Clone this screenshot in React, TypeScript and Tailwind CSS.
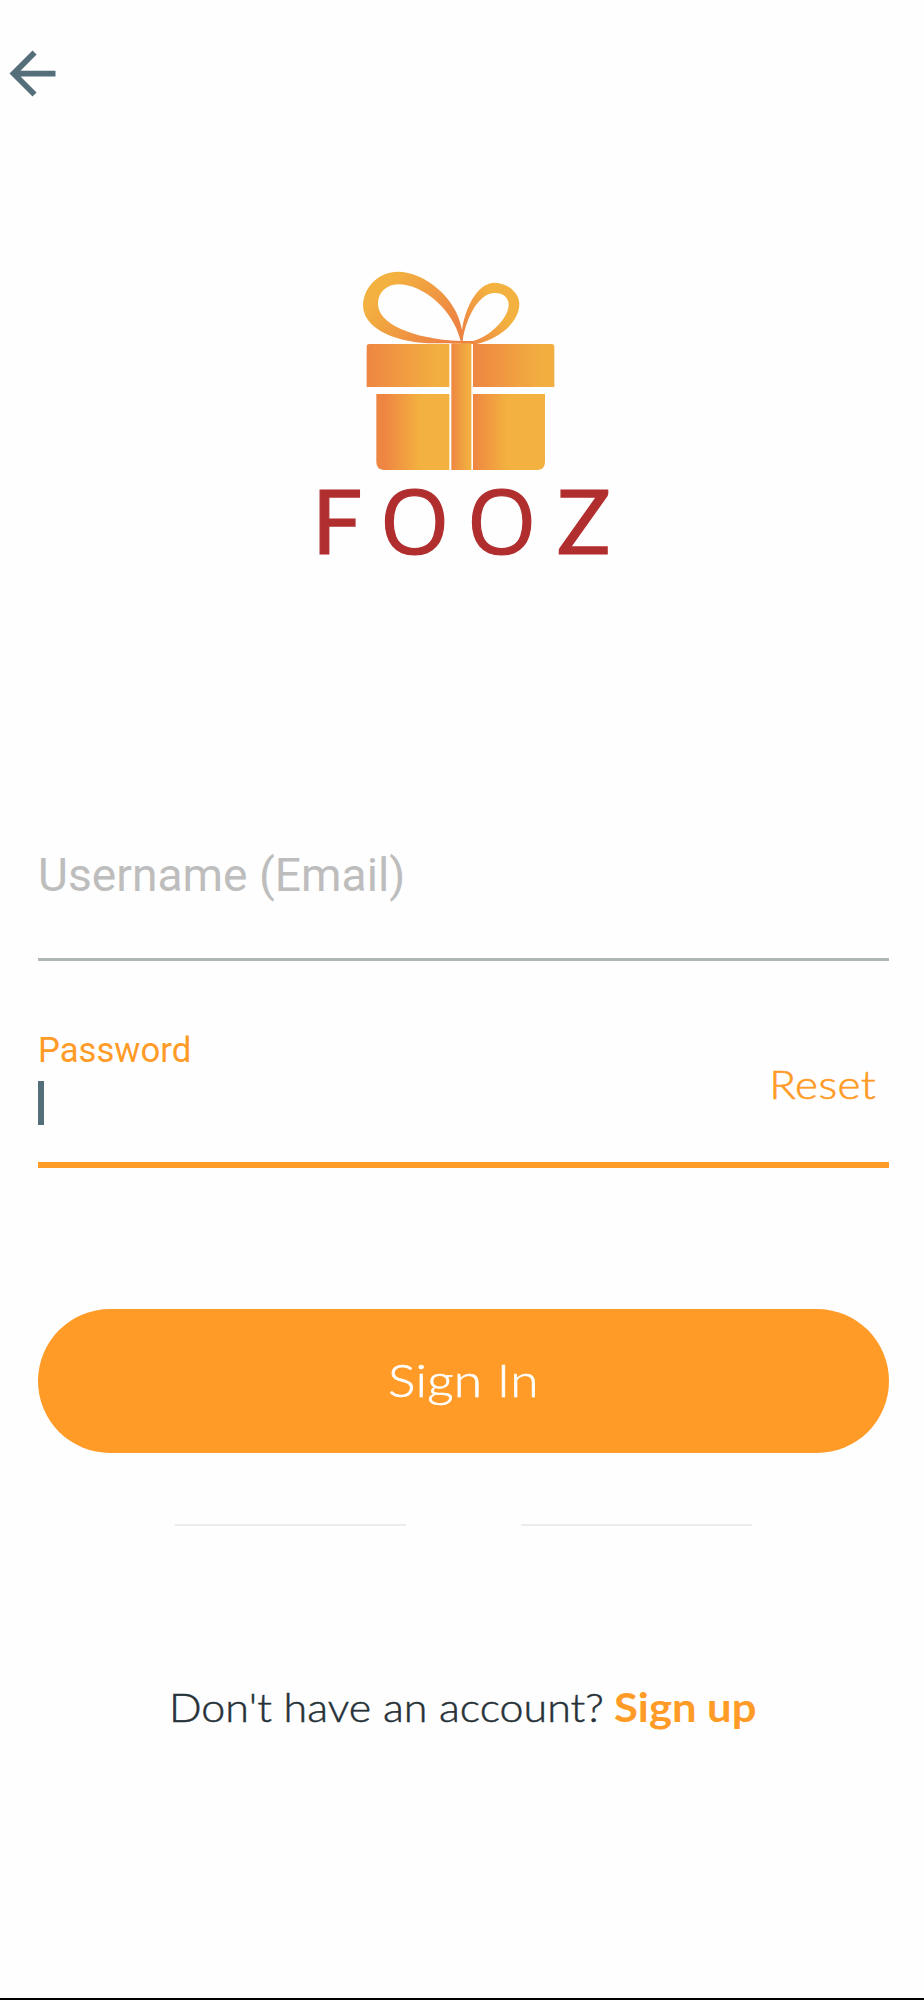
function BackArrow() {
  return (
    <svg viewBox="0 0 24 24" className="block size-[69px]" fill="#546e7a">
      <path d="M20 11H7.83l5.59-5.59L12 4l-8 8 8 8 1.41-1.41L7.83 13H20v-2z" />
    </svg>
  );
}

function Logo() {
  return (
    <svg viewBox="0 0 330 340" className="block h-[340px] w-[330px]">
      <defs>
        <linearGradient id="lid">
          <stop offset="0" stopColor="#ee8642" />
          <stop offset="0.85" stopColor="#f2af40" />
        </linearGradient>
        <linearGradient id="box">
          <stop offset="0.12" stopColor="#ee8642" />
          <stop offset="0.6" stopColor="#f3b13f" />
        </linearGradient>
        <linearGradient id="boxRight">
          <stop offset="0" stopColor="#ee8642" />
          <stop offset="0.47" stopColor="#f3b13f" />
        </linearGradient>
        <linearGradient id="loopLeft" x1="0.1" y1="0.2" x2="0.95" y2="0.75">
          <stop offset="0.1" stopColor="#f3b13f" />
          <stop offset="1" stopColor="#ed8343" />
        </linearGradient>
        <linearGradient id="loopRight" x1="0" y1="0.8" x2="0.8" y2="0.3">
          <stop offset="0" stopColor="#ed8343" />
          <stop offset="0.8" stopColor="#f3b13f" />
        </linearGradient>
      </defs>
      <g transform="translate(40 0) scale(0.33333)">
        <path
          fill="url(#loopLeft)"
          fillRule="evenodd"
          d="M366 250H265C150 243 69 200 69 135C72 78 118 35 174 35C250 35 350 110 366 210ZM362 243C340 150 250 73 175 73C138 74 114 98 114 132C114 190 215 237 362 243Z"
        />
        <path
          fill="url(#loopRight)"
          fillRule="evenodd"
          d="M366 210C375 145 412 68 464 68C504 69 538 98 538 132C538 186 480 235 410 252H362ZM368 243C376 182 412 100 464 99C490 99 506 113 506 134C506 174 449 230 399 243Z"
        />
        <path fill="url(#lid)" d="M80 381V260Q80 252 88 252H328V381Z" />
        <path fill="url(#lid)" d="M399 252H635Q643 252 643 260V381H399Z" />
        <path fill="url(#box)" d="M109 402H328V630H131Q109 628 109 606Z" />
        <path fill="url(#boxRight)" d="M399 402H615V606Q615 628 593 630H399Z" />
        <path fill="url(#lid)" d="M334 250H394V630H334Z" />
      </g>
      <text
        y="294.3"
        className="font-['Lato',sans-serif] text-[89px]"
        fill="#b12e2f"
        stroke="#b12e2f"
        strokeWidth="1.2"
      >
        <tspan x="12">F</tspan>
        <tspan x="80 167" className="font-['Open_Sans',sans-serif] font-medium">
          OO
        </tspan>
        <tspan x="257">Z</tspan>
      </text>
    </svg>
  );
}

export default function App() {
  return (
    <main className="flex h-[2000px] w-[924px] flex-col border-b-2 border-black bg-[#fefefe] font-['Lato',sans-serif]">
      <header className="-ml-0.5 pt-[39px]">
        <BackArrow />
      </header>

      <div className="mt-[152px] flex pl-[300px]">
        <Logo />
      </div>

      <form className="mt-[240px] flex flex-col pr-[35px] pl-[38px]">
        <div className="flex h-[121px] items-start border-b-3 border-[#afb6b6]">
          <label className="font-['Roboto',sans-serif] text-[46.2px] leading-[70px] whitespace-nowrap text-[#bdbdbd]">
            Username (Email)
          </label>
        </div>

        <div className="mt-[67px] flex h-[140px] justify-between border-b-6 border-[#ff9b26]">
          <div className="pt-px">
            <label className="block font-['Roboto',sans-serif] text-[34.7px] leading-[42px] text-[#ff9b26]">
              Password
            </label>
            <div className="mt-2.5 h-11 w-1.5 bg-[#546e7a]" />
          </div>
          <a className="mt-[32px] mr-[13px] origin-right scale-x-[1.1] text-[40px] leading-[48px] font-light tracking-[0.4px] text-[#ff9b26] [-webkit-text-stroke:0.6px]">
            Reset
          </a>
        </div>

        <button
          type="button"
          className="mt-[141px] h-[144px] rounded-full bg-[#ff9b26] pb-1 text-[46px] font-light text-white [-webkit-text-stroke:0.6px]"
        >
          <span className="inline-block scale-x-[1.12] tracking-[0.3px]">Sign In</span>
        </button>
      </form>

      <div className="mt-[71px] flex justify-center gap-[115px] pl-[3px]">
        <div className="h-0.5 w-[231px] bg-[#ececec]" />
        <div className="h-0.5 w-[231px] bg-[#ececec]" />
      </div>

      <p className="mt-[157px] flex pl-[169px] text-[40px] leading-[48px] whitespace-nowrap text-[#263238]">
        <span className="w-[445px] origin-left scale-x-[1.075] font-light [-webkit-text-stroke:0.5px]">
          Don't have an account?
        </span>
        <span className="origin-left scale-x-[1.09] font-bold text-[#ff9b26]">Sign up</span>
      </p>
    </main>
  );
}
